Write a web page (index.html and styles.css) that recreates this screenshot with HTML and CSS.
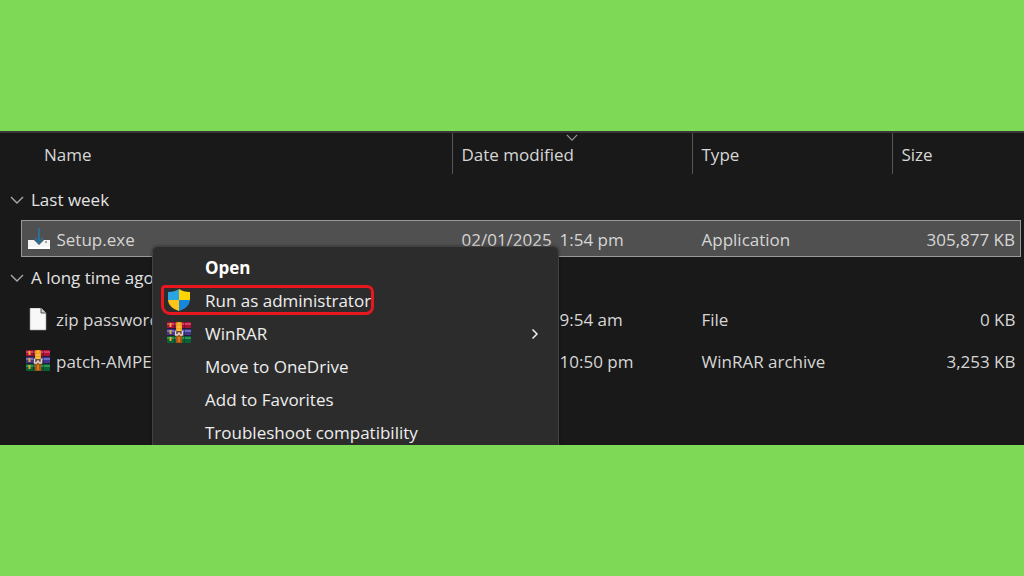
FILE: index.html
```
<!DOCTYPE html>
<html lang="en">
  <head>
    <meta charset="utf-8">
    <title>Files</title>
    <link rel="stylesheet" href="styles.css">
  </head>
  <body>
    <svg class="sprites" aria-hidden="true">
      <symbol id="chevron" viewBox="0 0 14 8">
        <path d="M1 1l6 6 6-6" fill="none" stroke="currentColor" stroke-width="1.4"/>
      </symbol>
      <symbol id="rar" viewBox="0 0 24 21">
        <rect y="0" width="24" height="7" rx="1" fill="#a81238"/>
        <rect y="1" width="24" height="2" fill="#d93a62"/>
        <rect y="7" width="24" height="7" rx="1" fill="#40368c"/>
        <rect y="8" width="24" height="2" fill="#6f6cc4"/>
        <rect y="14" width="24" height="7" rx="1" fill="#0b6133"/>
        <rect y="15" width="24" height="2" fill="#29964f"/>
        <path d="M0 6.500h24M0 13.500h24" stroke="#2b1a35"/>
        <path d="M3.500 1v4M3.500 8v4M3.500 15v4" stroke="#e6a92c" stroke-width="2"/>
        <path d="M7.500 0v21M17.500 0v21" stroke="#2b2030" opacity=".5"/>
        <rect x="9" width="6" height="21" fill="#a85412"/>
        <rect x="9" width="6" height="11" rx="2" fill="#eda01c"/>
        <path d="M11 2h2M10 5h4M10 8h4" stroke="#ffd55c"/>
        <path d="M9 9c-1 5 5 5 6 0" fill="#6b4b3b"/>
        <path d="M8.500 9v4h2l1.500-2 1.500 2h2V9" fill="none" stroke="#ddd2d2" stroke-width="1.400"/>
        <path d="M12 15v5" stroke="#df761b" stroke-width="2"/>
      </symbol>
    </svg>

    <main class="explorer">
      <table class="files">
        <colgroup>
          <col class="col-gutter">
          <col class="col-name">
          <col class="col-date">
          <col class="col-type">
          <col class="col-size">
        </colgroup>
        <thead>
          <tr>
            <td></td>
            <th class="name-head" scope="col"><div>Name</div></th>
            <th scope="col">
              <div class="sep">Date modified
                <svg class="sort" viewBox="0 0 14 8"><use href="#chevron"/></svg>
              </div>
            </th>
            <th scope="col"><div class="sep">Type</div></th>
            <th scope="col"><div class="sep">Size</div></th>
          </tr>
        </thead>
        <tbody>
          <tr class="group">
            <th colspan="5" scope="rowgroup">
              <button type="button"><svg class="chevron" viewBox="0 0 14 8"><use href="#chevron"/></svg>Last week</button>
            </th>
          </tr>
          <tr class="selected">
            <td></td>
            <td>
              <div class="name">
                <svg class="icon" viewBox="0 0 24 24">
                  <path d="M1 12h22v8a1 1 0 0 1-1 1H2a1 1 0 0 1-1-1z" fill="#f4f4f4"/>
                  <path d="M6 11h12l-6 6z" fill="#505050"/>
                  <path d="M1 19h22v2H1z" fill="#fff"/>
                  <path d="M12 0v14M8 10l4 5 4-5" fill="none" stroke="#2b6f99" stroke-width="2"/>
                  <path d="M18 14h2" stroke="#555"/>
                </svg>
                Setup.exe
              </div>
            </td>
            <td><span class="date">02/01/2025</span>1:54 pm</td>
            <td>Application</td>
            <td class="size">305,877 KB</td>
          </tr>
        </tbody>
        <tbody>
          <tr class="group">
            <th colspan="5" scope="rowgroup">
              <button type="button"><svg class="chevron" viewBox="0 0 14 8"><use href="#chevron"/></svg>A long time ago</button>
            </th>
          </tr>
          <tr>
            <td></td>
            <td>
              <div class="name">
                <svg class="icon" viewBox="0 0 24 24">
                  <path d="M4 0h11l5 5v17H4z" fill="#f8f8f8" stroke="#999" stroke-width=".6"/>
                  <path d="M15 0v5h5" fill="#ccc" stroke="#555"/>
                </svg>
                zip password
              </div>
            </td>
            <td><span class="date"></span>9:54 am</td>
            <td>File</td>
            <td class="size">0 KB</td>
          </tr>
          <tr>
            <td></td>
            <td>
              <div class="name">
                <svg class="icon rar" viewBox="0 0 24 21"><use href="#rar"/></svg>
                patch-AMPE
              </div>
            </td>
            <td><span class="date"></span>10:50 pm</td>
            <td>WinRAR archive</td>
            <td class="size">3,253 KB</td>
          </tr>
        </tbody>
      </table>

      <menu class="context">
        <li><button type="button" class="default"><span class="icon"></span>Open</button></li>
        <li>
          <button type="button">
            <svg class="icon" viewBox="0 0 24 24">
              <clipPath id="shield"><path d="M12 0c3 2 6 3 11 3v7c0 6-4 9.500-11 12C5 19.500 1 16 1 10V3C6 3 9 2 12 0z"/></clipPath>
              <g clip-path="url(#shield)">
                <path d="M0 0h12v11H0z" fill="#29a5e3"/>
                <path d="M12 0h12v11H12z" fill="#ffd400"/>
                <path d="M0 11h12v12H0z" fill="#fcc419"/>
                <path d="M12 11h12v12H12z" fill="#1787dc"/>
              </g>
            </svg>
            Run as administrator
          </button>
          <span class="mark"></span>
        </li>
        <li>
          <button type="button">
            <svg class="icon rar" viewBox="0 0 24 21"><use href="#rar"/></svg>
            WinRAR
            <svg class="more" viewBox="0 0 8 12"><path d="M1.500 1.500L6 6l-4.500 4.500" fill="none" stroke="currentColor" stroke-width="1.500"/></svg>
          </button>
        </li>
        <li><button type="button"><span class="icon"></span>Move to OneDrive</button></li>
        <li><button type="button"><span class="icon"></span>Add to Favorites</button></li>
        <li><button type="button"><span class="icon"></span>Troubleshoot compatibility</button></li>
      </menu>
    </main>
  </body>
</html>
```

FILE: styles.css
```
* { box-sizing: border-box; }

body { margin: 0; min-height: 100vh; display: flex; flex-direction: column; justify-content: center; background: #7ed957; font-family: "Open Sans", "Segoe UI", sans-serif; font-size: 17px; line-height: 24px; color: #d6d6d6; }

button { background: none; border: none; padding: 0; font: inherit; color: inherit; display: flex; align-items: center; text-align: left; white-space: nowrap; }

.sprites { position: absolute; width: 0; height: 0; }
.icon { width: 24px; height: 24px; flex: none; }

.explorer { position: relative; overflow: hidden; background: #191919; border-top: 2px solid #383838; padding: 0 3px 62px 0; }

.files { width: 100%; table-layout: fixed; border-collapse: collapse; }
.files th, .files td { padding: 0; font-weight: 400; text-align: left; white-space: nowrap; }
.files tr { height: 42px; }
.files td:nth-child(n+3) { padding-left: 10px; }
.files td.size { text-align: right; padding-right: 5px; }

.col-gutter { width: 21px; }
.col-date { width: 240px; }
.col-type { width: 200px; }
.col-size { width: 129px; }

.files thead tr { height: 47px; }
.files thead th { vertical-align: top; }
.files thead th > div { position: relative; height: 41px; padding-top: 10px; }
.files .name-head { padding-left: 23px; }
.files .sep { border-left: 1px solid #555; padding-left: 9px; }
.sort { position: absolute; top: 1px; left: calc(50% - 6px); width: 12px; height: 7px; color: #999; }

.files .group { height: 43px; }
.group th { color: #e2e2e2; }
.group button { padding-left: 10px; gap: 7px; }
.chevron { width: 14px; height: 8px; color: #aaa; }

.files thead + tbody .group { height: 40px; }
.files .selected { height: 36px; }
.files .selected td { padding-top: 4px; }
.selected td:nth-child(n+2) { background: #505050; border-top: 1px solid #999; border-bottom: 1px solid #999; }
.selected td:nth-child(2) { border-left: 1px solid #999; }
.selected td:last-child { border-right: 1px solid #999; }

.name { display: flex; align-items: center; gap: 6px; padding-left: 5px; }
.date { display: inline-block; width: 98px; }

.context { position: absolute; top: 113px; left: 152px; width: 407px; margin: 0; padding: 4px 0; list-style: none; background: #2c2c2c; border: 1px solid #414141; border-radius: 6px; color: #eee; box-shadow: 0 0 3px rgba(0, 0, 0, 0.4); }
.context li { position: relative; }
.context button { width: 100%; height: 33px; padding: 0 19px 0 14px; gap: 14px; }
.context .default { font-weight: 700; color: #fff; }
.more { width: 8px; height: 12px; margin-left: auto; }
.icon.rar { padding-bottom: 3px; }

.mark { position: absolute; top: 1px; left: 8px; width: 213px; height: 30px; border: 3px solid #e81720; border-radius: 4px 7px 8px 9px; pointer-events: none; }
```
